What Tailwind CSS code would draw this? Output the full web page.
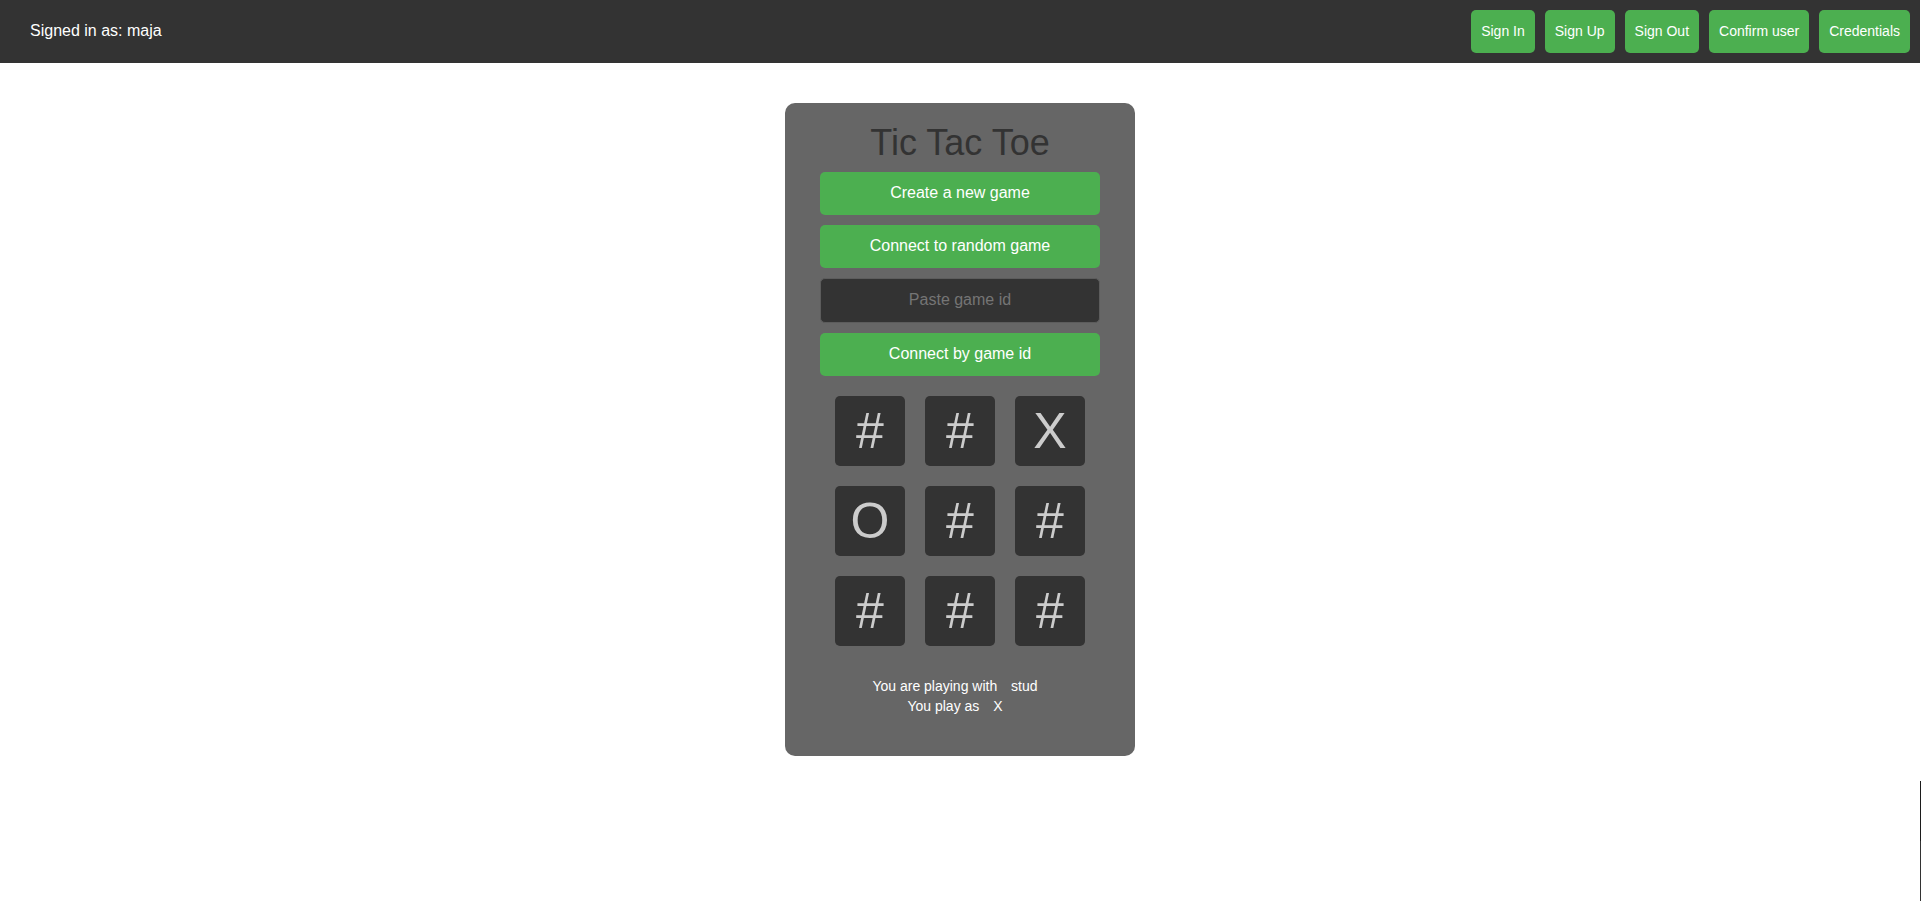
<!DOCTYPE html>
<html lang="en">
<head>
<meta charset="utf-8">
<meta name="viewport" content="width=device-width, initial-scale=1">
<title>Tic Tac Toe</title>
<script src="https://cdn.jsdelivr.net/npm/@tailwindcss/browser@4"></script>
</head>
<body class="relative min-h-screen bg-white pr-px font-['Liberation_Sans',Arial,sans-serif] text-sm/5 text-white">
<header class="flex items-center justify-between bg-[#333333] py-[10px] pr-[10px] pl-[30px]">
  <p class="pb-[2px] text-base">Signed in as: maja</p>
  <nav class="flex gap-[10px]">
    <button type="button" class="rounded-[5px] bg-[#4caf50] px-[10px] pt-[11px] pb-3">Sign In</button>
    <button type="button" class="rounded-[5px] bg-[#4caf50] px-[10px] pt-[11px] pb-3">Sign Up</button>
    <button type="button" class="rounded-[5px] bg-[#4caf50] px-[10px] pt-[11px] pb-3">Sign Out</button>
    <button type="button" class="rounded-[5px] bg-[#4caf50] px-[10px] pt-[11px] pb-3">Confirm user</button>
    <button type="button" class="rounded-[5px] bg-[#4caf50] px-[10px] pt-[11px] pb-3">Credentials</button>
  </nav>
</header>
<main class="mx-auto mt-10 w-full max-w-[350px] rounded-[10px] bg-[#666666] px-[35px] pt-5 pb-10 text-center">
  <h1 class="text-4xl/[39px] text-[#333333]">Tic Tac Toe</h1>
  <form class="mt-[10px] flex flex-col gap-[10px] text-base/[23px]">
    <button type="button" class="rounded-[5px] bg-[#4caf50] pt-[9px] pb-[11px]">Create a new game</button>
    <button type="button" class="rounded-[5px] bg-[#4caf50] pt-[9px] pb-[11px]">Connect to random game</button>
    <input type="text" aria-label="Game id" placeholder="Paste game id" class="w-full rounded-[5px] border border-[#5c5c5c] bg-[#333333] pt-[9px] pb-[11px] text-center placeholder:text-[#757575]">
    <button type="button" class="rounded-[5px] bg-[#4caf50] pt-[9px] pb-[11px]">Connect by game id</button>
  </form>
  <div class="mt-5 grid grid-cols-[repeat(3,70px)] justify-center gap-5 text-[50px]/[70px] text-[#cccccc]">
    <button type="button" class="rounded-[5px] bg-[#333333]">#</button>
    <button type="button" class="rounded-[5px] bg-[#333333]">#</button>
    <button type="button" class="rounded-[5px] bg-[#333333]">X</button>
    <button type="button" class="rounded-[5px] bg-[#333333]">O</button>
    <button type="button" class="rounded-[5px] bg-[#333333]">#</button>
    <button type="button" class="rounded-[5px] bg-[#333333]">#</button>
    <button type="button" class="rounded-[5px] bg-[#333333]">#</button>
    <button type="button" class="rounded-[5px] bg-[#333333]">#</button>
    <button type="button" class="rounded-[5px] bg-[#333333]">#</button>
  </div>
  <div class="mt-[30px]">
    <p><span class="mr-[10px]">You are playing with</span> <span class="mr-[10px]">stud</span></p>
    <p><span class="mr-[10px]">You play as</span> <span class="mr-[10px]">X</span></p>
  </div>
</main>
<div class="absolute right-0 bottom-0 flex h-[120px] w-px flex-col"><div class="h-1/2 bg-[#1c1c1c]"></div><div class="h-1/2 bg-[#333333]"></div></div>
</body>
</html>
